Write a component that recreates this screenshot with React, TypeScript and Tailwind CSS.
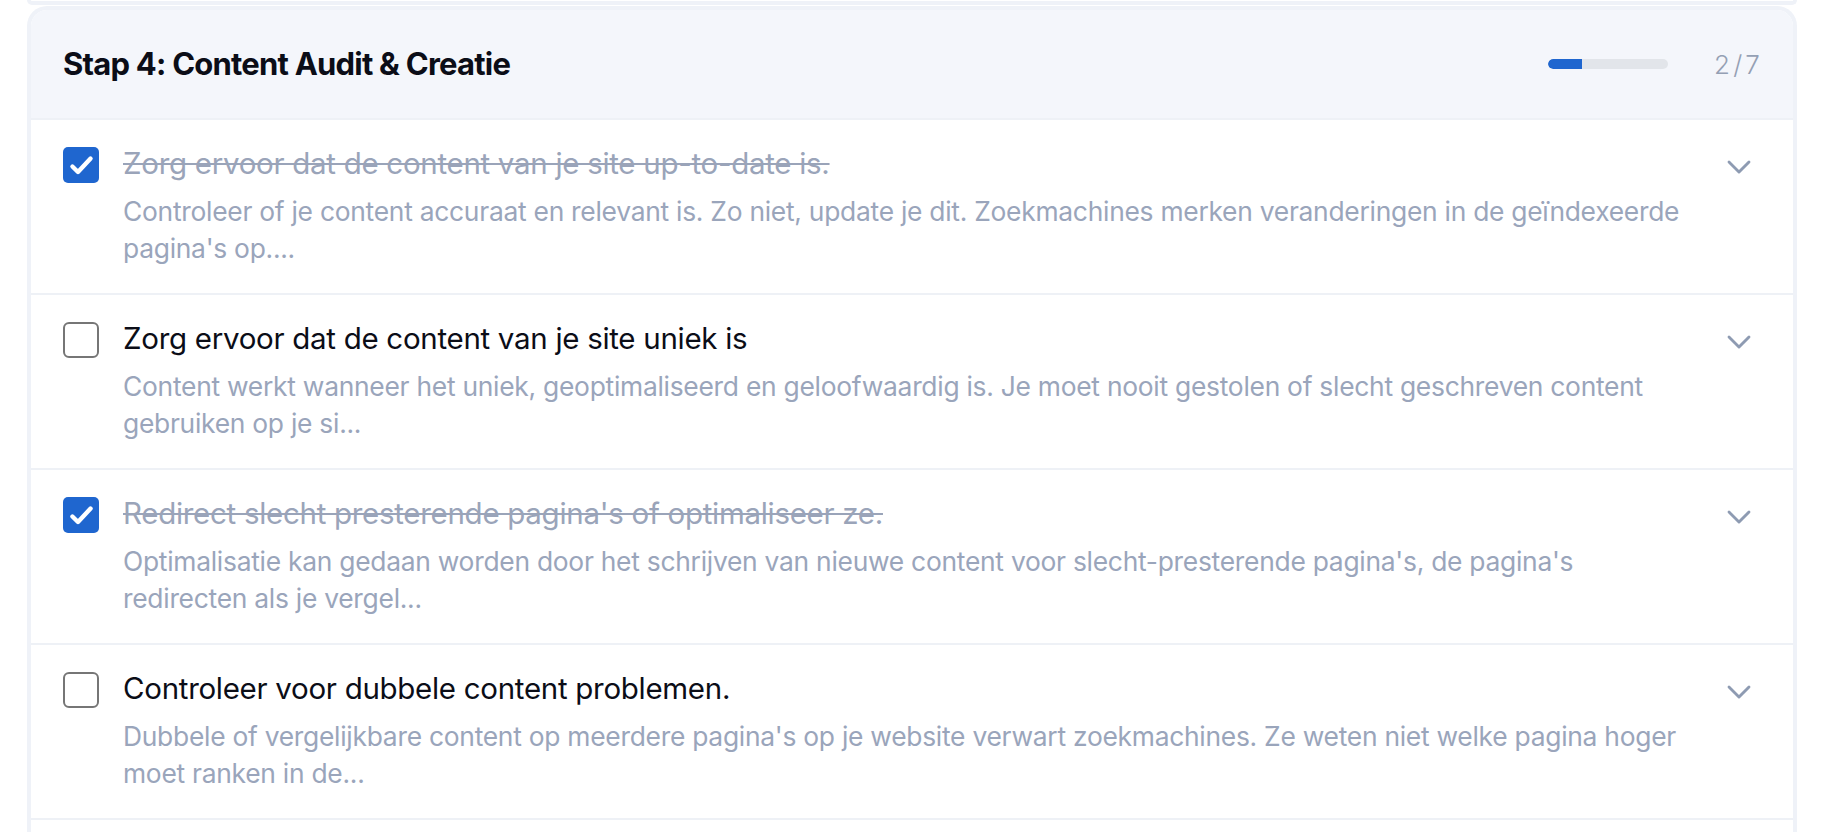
import { ChevronDown } from 'lucide-react'

const ITEMS = [
  {
    title: 'Zorg ervoor dat de content van je site up-to-date is.',
    desc: "Controleer of je content accuraat en relevant is. Zo niet, update je dit. Zoekmachines merken veranderingen in de geïndexeerde pagina's op....",
    done: true,
  },
  {
    title: 'Zorg ervoor dat de content van je site uniek is',
    desc: 'Content werkt wanneer het uniek, geoptimaliseerd en geloofwaardig is. Je moet nooit gestolen of slecht geschreven content gebruiken op je si...',
    done: false,
  },
  {
    title: "Redirect slecht presterende pagina's of optimaliseer ze.",
    desc: "Optimalisatie kan gedaan worden door het schrijven van nieuwe content voor slecht-presterende pagina's, de pagina's redirecten als je vergel...",
    done: true,
  },
  {
    title: 'Controleer voor dubbele content problemen.',
    desc: "Dubbele of vergelijkbare content op meerdere pagina's op je website verwart zoekmachines. Ze weten niet welke pagina hoger moet ranken in de...",
    done: false,
  },
]

function Checkbox({ checked }: { checked: boolean }) {
  if (checked) {
    return (
      <span className="mt-1 flex h-9 w-9 shrink-0 items-center justify-center rounded-[5px] bg-[#1f66cf]">
        <svg width="29" height="29" viewBox="0 0 24 24" fill="none">
          <path d="M4.5 12.8l4.6 4.6L19.5 6.2" stroke="white" strokeWidth="3.6" strokeLinecap="round" strokeLinejoin="round" />
        </svg>
      </span>
    )
  }
  return <span className="mt-1 h-9 w-9 shrink-0 rounded-[6px] border-2 border-[#767676] bg-white" />
}

export default function App() {
  return (
    <main className="h-screen overflow-hidden bg-white px-[27px] font-['Inter',sans-serif]">
      {/* tail of previous step */}
      <div className="h-[5px] rounded-b-[20px] border-x-4 border-b-4 border-[#eff2f8]" />

      <section className="mt-[1px] rounded-t-[20px] border-x-4 border-t-4 border-[#eff2f8]">
        {/* Header */}
        <div className="flex h-[110px] items-center rounded-t-[16px] border-b-2 border-[#eef1f6] bg-[#f4f6fb] pl-8 pr-[30px]">
          <h2 className="flex-1 text-[31px] font-bold tracking-[-0.025em] text-[#0b0d17]">
            Stap 4: Content Audit &amp; Creatie
          </h2>
          <div className="mr-[46px] h-[10px] w-[120px] overflow-hidden rounded-full bg-[#e2e5ea]">
            <div className="h-full rounded-l-full bg-[#1f66cf]" style={{ width: `${(2 / 7) * 100}%` }} />
          </div>
          <span className="text-[26px] font-light tracking-[0.12em] text-[#94a0b4]">2/7</span>
        </div>

        {/* Checklist */}
        <div className="divide-y-2 divide-[#eef1f6]">
          {ITEMS.map((item, i) => (
            <div key={i} className="flex pb-[26px] pl-8 pr-[34px] pt-[23px]">
              <Checkbox checked={item.done} />
              <div className="ml-6 mr-[22px] min-w-0 flex-1">
                <p
                  className={`text-[29.5px] leading-[40px] tracking-[-0.01em] ${
                    item.done ? 'text-[#9aa4b9] line-through decoration-[#9aa4b9]' : 'text-[#0b0d17]'
                  }`}
                >
                  {item.title}
                </p>
                <p className="mt-[10px] text-[26.4px] leading-[37px] tracking-[-0.01em] text-[#9aa5bb]">{item.desc}</p>
              </div>
              <ChevronDown size={40} strokeWidth={1.7} className="mt-[4px] shrink-0 text-[#8e9bb2]" />
            </div>
          ))}
          {/* next item, below the fold */}
          <div className="h-[60px]" />
        </div>
      </section>
    </main>
  )
}
